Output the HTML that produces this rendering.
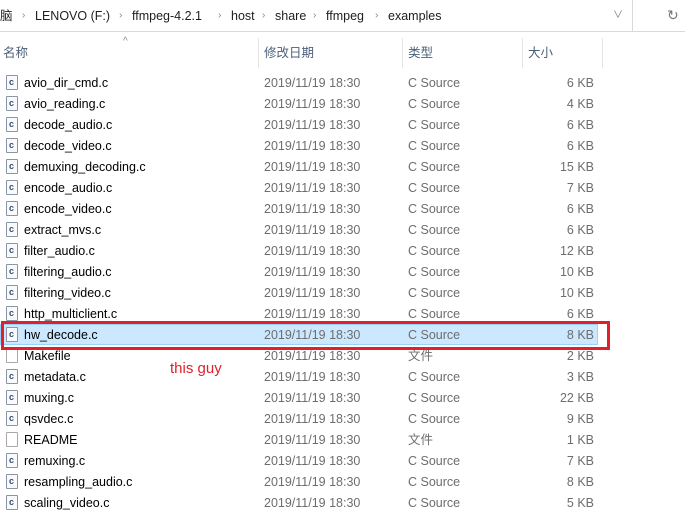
<!DOCTYPE html>
<html><head><meta charset="utf-8"><style>
body{margin:0;width:685px;height:513px;background:#fff;overflow:hidden;position:relative;font-family:"Liberation Sans","Noto Sans CJK SC",sans-serif;font-size:12.5px;color:#1e1e1e}
span{line-height:16px}
.addr{position:absolute;left:0;top:0;width:632px;height:31px;border-bottom:1px solid #d9d9d9;}
.addr span{position:absolute;top:8px;}
.sep{color:#888;font-size:10px}
.btn{position:absolute;left:632px;top:0;width:53px;height:31px;border-left:1px solid #d9d9d9;border-bottom:1px solid #d9d9d9}
.hdr{position:absolute;top:38px;height:30px;left:0;width:685px;color:#4c607a}
.hdr span{position:absolute;top:7px}
.vs{position:absolute;top:38px;height:30px;width:1px;background:#e5e5e5}
.row{position:absolute;left:0;width:602px;height:21px}
.row span{position:absolute;top:3px;white-space:nowrap}
.n{left:24px;color:#000}
.d{left:264px;color:#6d6d6d}
.t{left:408px;color:#6d6d6d}
.s{right:8px;color:#6d6d6d}
.sel .s{right:4px}
.ic{position:absolute;left:6px;top:3px;width:10px;height:13px;border:1px solid #8a96a8;background:#f8fafc;border-radius:1px}
.ic b{position:absolute;left:2px;top:1px;font-size:9px;line-height:10px;color:#3a4a6a;font-family:"Liberation Sans",sans-serif}
.ic.p{border-color:#a8a8a8;background:#fff}
.sel{background:#cce8ff;box-shadow:inset 0 0 0 1px #99d1ff;width:598px}
</style></head><body>
<div class="addr">
<span style="left:0">脑</span>
<span class="sep" style="left:22px">›</span><span style="left:35px">LENOVO (F:)</span>
<span class="sep" style="left:119px">›</span><span style="left:132px">ffmpeg-4.2.1</span>
<span class="sep" style="left:218px">›</span><span style="left:231px">host</span>
<span class="sep" style="left:262px">›</span><span style="left:275px">share</span>
<span class="sep" style="left:313px">›</span><span style="left:326px">ffmpeg</span>
<span class="sep" style="left:375px">›</span><span style="left:388px">examples</span>
<span style="left:613px;color:#777;font-size:10px">∨</span>
</div>
<div class="btn"><span style="position:absolute;left:34px;top:7px;color:#777;font-size:14px">↻</span></div>
<div class="hdr"><span style="left:3px">名称</span><span style="left:123px;top:-4px;font-size:10px;color:#888">^</span><span style="left:264px">修改日期</span><span style="left:408px">类型</span><span style="left:528px">大小</span></div>
<div class="vs" style="left:258px"></div><div class="vs" style="left:402px"></div><div class="vs" style="left:522px"></div><div class="vs" style="left:602px"></div>
<div id="rows"></div>
<div style="position:absolute;left:1px;top:321px;width:603px;height:23px;border:3px solid #e0202a"></div>
<div style="position:absolute;left:170px;top:360px;color:#e0202a;font-size:15px;line-height:18px">this guy</div>
<script>
var f=[["avio_dir_cmd.c",6],["avio_reading.c",4],["decode_audio.c",6],["decode_video.c",6],["demuxing_decoding.c",15],["encode_audio.c",7],["encode_video.c",6],["extract_mvs.c",6],["filter_audio.c",12],["filtering_audio.c",10],["filtering_video.c",10],["http_multiclient.c",6],["hw_decode.c",8],["Makefile",2,1],["metadata.c",3],["muxing.c",22],["qsvdec.c",9],["README",1,1],["remuxing.c",7],["resampling_audio.c",8],["scaling_video.c",5]];
var h="";f.forEach(function(r,i){var top=72+i*21;h+='<div class="row'+(i==12?' sel':'')+'" style="top:'+top+'px"><div class="ic'+(r[2]?' p':'')+'">'+(r[2]?'':'<b>c</b>')+'</div><span class="n">'+r[0]+'</span><span class="d">2019/11/19 18:30</span><span class="t">'+(r[2]?'文件':'C Source')+'</span><span class="s">'+r[1]+' KB</span></div>';});
document.getElementById("rows").innerHTML=h;
</script>
</body></html>
